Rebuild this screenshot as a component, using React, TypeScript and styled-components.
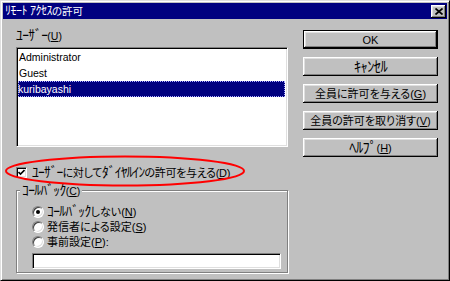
import React from "react";
import styled, { createGlobalStyle } from "styled-components";

const GlobalStyle = createGlobalStyle`
  html, body { margin: 0; padding: 0; background: #c0c0c0; }
  body {
    font-family: "Liberation Sans", "Noto Sans CJK JP", sans-serif;
    font-size: 11px;
    font-feature-settings: "palt" 1;
    color: #000;
  }
`;

const Window = styled.div`
  position: relative;
  width: 450px;
  height: 281px;
  box-sizing: border-box;
  background: #c0c0c0;
  border: 1px solid;
  border-color: #dfdfdf #000 #000 #dfdfdf;
  box-shadow: inset 1px 1px #fff, inset -1px -1px #808080;
  padding: 2px;
  display: flex;
  flex-direction: column;
`;

const TitleBar = styled.div`
  height: 16px;
  background: #000080;
  color: #fff;
  display: flex;
  align-items: center;
  justify-content: space-between;
  padding: 0 1px 0 2px;
`;

const TitleText = styled.span`
  font-size: 10.5px;
  line-height: 16px;
`;

/* half-width katakana run, drawn taller so it reads at full height like the bitmap font */
const Kana = styled.span<{ $size?: number; $track?: number }>`
  font-family: "Noto Sans CJK JP", sans-serif;
  font-size: ${(p) => p.$size ?? 13.5}px;
  letter-spacing: ${(p) => p.$track ?? -0.6}px;
  line-height: 1;
`;

const CloseButton = styled.div`
  width: 15px;
  height: 13px;
  box-sizing: border-box;
  background: #c0c0c0;
  box-shadow: inset -1px -1px #000, inset 1px 1px #fff, inset -2px -2px #808080, inset 2px 2px #dfdfdf;
  display: flex;
  align-items: center;
  justify-content: center;
`;

const Body = styled.div`
  display: grid;
  grid-template-columns: 272px 135px;
  column-gap: 15px;
  padding: 9px 0 0 13px;
`;

const LeftColumn = styled.div`
  display: flex;
  flex-direction: column;
`;

const FieldLabel = styled.div`
  line-height: 14px;
  height: 14px;
  font-size: 10.5px;
`;

const Acc = styled.span`
  text-decoration: underline;
`;

const ListBox = styled.div`
  margin-top: 5px;
  height: 100px;
  box-sizing: border-box;
  background: #fff;
  border: 1px solid;
  border-color: #808080 #fff #fff #808080;
  box-shadow: inset 1px 1px #000, inset -1px -1px #dfdfdf;
  padding: 1px 2px 0 1px;
  display: flex;
  flex-direction: column;
  font-size: 10.5px;
`;

const ListItem = styled.div<{ $selected?: boolean }>`
  height: 16px;
  line-height: 16px;
  padding-left: ${(p) => (p.$selected ? "0px" : "1px")};
  background: ${(p) => (p.$selected ? "#000080" : "transparent")};
  color: ${(p) => (p.$selected ? "#fff" : "#000")};
  outline: ${(p) => (p.$selected ? "1px dotted #b0b0ff" : "none")};
  outline-offset: -1px;
`;

const CheckRow = styled.div`
  margin-top: 18px;
  height: 14px;
  display: flex;
  align-items: center;
  gap: 5px;
  line-height: 14px;
`;

const CheckText = styled.span`
  letter-spacing: -0.3px;
`;

const CheckBox = styled.span`
  width: 11px;
  height: 11px;
  box-sizing: border-box;
  background: #fff;
  border: 1px solid;
  border-color: #808080 #fff #fff #808080;
  box-shadow: inset 1px 1px #000, inset -1px -1px #dfdfdf;
  display: flex;
  align-items: center;
  justify-content: center;
  flex: none;
`;

const GroupBox = styled.div`
  position: relative;
  margin-top: 11px;
  height: 83px;
  box-sizing: border-box;
  border: 1px solid #808080;
  box-shadow: inset 1px 1px 0 #fff, 1px 1px 0 #fff;
  padding: 13px 0 0 15px;
  display: flex;
  flex-direction: column;
`;

const GroupLabel = styled.span`
  position: absolute;
  top: -8px;
  left: 3px;
  padding: 0 2px;
  background: #c0c0c0;
  line-height: 14px;
  font-size: 10.5px;
`;

const RadioRow = styled.div`
  height: 15px;
  display: flex;
  align-items: center;
  gap: 3px;
  line-height: 14px;
`;

const Radio = styled.span<{ $checked?: boolean }>`
  position: relative;
  width: 12px;
  height: 12px;
  box-sizing: border-box;
  border-radius: 50%;
  background: #fff;
  border: 1px solid;
  border-color: #808080 #fff #fff #808080;
  box-shadow: inset 1px 1px #404040, inset -1px -1px #dfdfdf;
  flex: none;
  &::after {
    content: "";
    display: ${(p) => (p.$checked ? "block" : "none")};
    position: absolute;
    left: 3px;
    top: 3px;
    width: 4px;
    height: 4px;
    border-radius: 50%;
    background: #000;
  }
`;

const TextInput = styled.div`
  margin-top: 4px;
  width: 249px;
  height: 16px;
  box-sizing: border-box;
  background: #fff;
  border: 1px solid;
  border-color: #808080 #fff #fff #808080;
  box-shadow: inset 1px 1px #000, inset -1px -1px #dfdfdf;
`;

const ButtonColumn = styled.div`
  padding-top: 2px;
  display: flex;
  flex-direction: column;
  gap: 8px;
`;

const Button = styled.div<{ $default?: boolean }>`
  height: 19px;
  box-sizing: border-box;
  background: #c0c0c0;
  display: flex;
  align-items: center;
  justify-content: center;
  line-height: 14px;
  border: ${(p) => (p.$default ? "1px solid #000" : "none")};
  box-shadow: inset -1px -1px #000, inset 1px 1px #fff, inset -2px -2px #808080, inset 2px 2px #dfdfdf;
`;

const Annotation = styled.svg`
  position: absolute;
  left: 0;
  top: 0;
  pointer-events: none;
`;

export default function App() {
  return (
    <>
      <GlobalStyle />
      <Window>
        <TitleBar>
          <TitleText>
            <Kana $size={12} $track={-0.5}>ﾘﾓｰﾄ</Kana> <Kana $size={12} $track={-0.5}>ｱｸｾｽ</Kana>の許可
          </TitleText>
          <CloseButton>
            <svg width="8" height="7" viewBox="0 0 8 7">
              <path d="M0.5 0.5 L7.5 6.5 M7.5 0.5 L0.5 6.5" stroke="#000" strokeWidth="1.7" />
            </svg>
          </CloseButton>
        </TitleBar>
        <Body>
          <LeftColumn>
            <FieldLabel>
              <Kana>ﾕｰｻﾞｰ</Kana>(<Acc>U</Acc>)
            </FieldLabel>
            <ListBox>
              <ListItem>Administrator</ListItem>
              <ListItem>Guest</ListItem>
              <ListItem $selected>kuribayashi</ListItem>
            </ListBox>
            <CheckRow>
              <CheckBox>
                <svg width="7" height="7" viewBox="0 0 7 7">
                  <path d="M0.5 3 L2.5 5 L6.5 1" stroke="#000" strokeWidth="1.6" fill="none" />
                </svg>
              </CheckBox>
              <CheckText>
                <Kana $track={-0.8}>ﾕｰｻﾞｰ</Kana>に対して<Kana $track={-0.8}>ﾀﾞｲﾔﾙｲﾝ</Kana>の許可を与える(<Acc>D</Acc>)
              </CheckText>
            </CheckRow>
            <GroupBox>
              <GroupLabel>
                <Kana>ｺｰﾙﾊﾞｯｸ</Kana>(<Acc>C</Acc>)
              </GroupLabel>
              <RadioRow>
                <Radio $checked />
                <span>
                  <Kana>ｺｰﾙﾊﾞｯｸ</Kana>しない(<Acc>N</Acc>)
                </span>
              </RadioRow>
              <RadioRow>
                <Radio />
                <span>
                  発信者による設定(<Acc>S</Acc>)
                </span>
              </RadioRow>
              <RadioRow>
                <Radio />
                <span>
                  事前設定(<Acc>P</Acc>):
                </span>
              </RadioRow>
              <TextInput />
            </GroupBox>
          </LeftColumn>
          <ButtonColumn>
            <Button $default>OK</Button>
            <Button>
              <Kana $size={14.5}>ｷｬﾝｾﾙ</Kana>
            </Button>
            <Button>
              全員に許可を与える(<Acc>G</Acc>)
            </Button>
            <Button>
              全員の許可を取り消す(<Acc>V</Acc>)
            </Button>
            <Button>
              <Kana $size={14.5}>ﾍﾙﾌﾟ</Kana>(<Acc>H</Acc>)
            </Button>
          </ButtonColumn>
        </Body>
        <Annotation width="450" height="281" viewBox="0 0 450 281">
          <ellipse cx="124" cy="170" rx="119" ry="14.5" fill="none" stroke="#f00" strokeWidth="2" />
        </Annotation>
      </Window>
    </>
  );
}
